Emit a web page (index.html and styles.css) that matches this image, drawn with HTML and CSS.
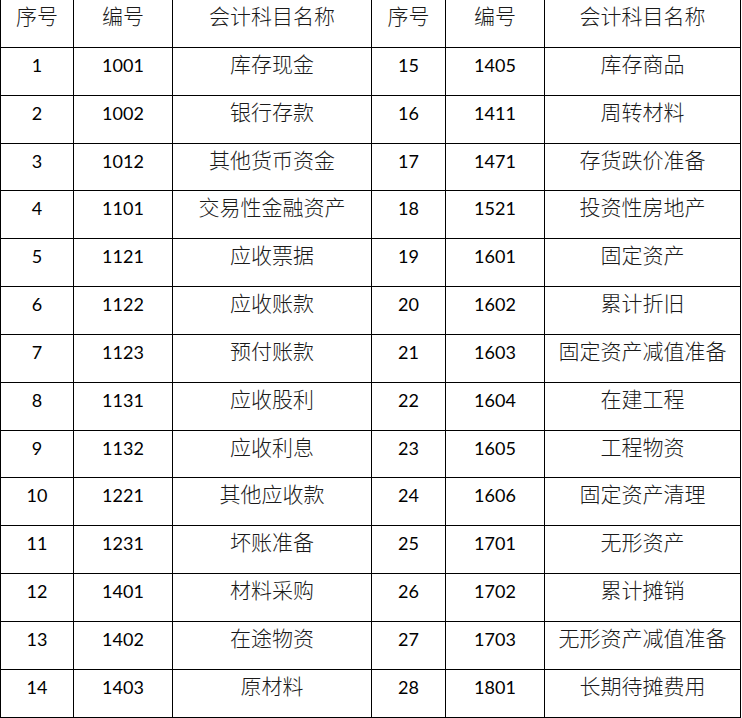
FILE: index.html
```html
<!DOCTYPE html>
<html lang="zh-CN">
<head>
<meta charset="utf-8">
<title>会计科目表</title>
<link rel="stylesheet" href="styles.css">
</head>
<body>
<div class="sheet">
  <div class="cell head">序号</div><div class="cell head">编号</div><div class="cell head">会计科目名称</div><div class="cell head">序号</div><div class="cell head">编号</div><div class="cell head">会计科目名称</div>

  <div class="cell num">1</div><div class="cell num">1001</div><div class="cell name">库存现金</div><div class="cell num">15</div><div class="cell num">1405</div><div class="cell name">库存商品</div>
  <div class="cell num">2</div><div class="cell num">1002</div><div class="cell name">银行存款</div><div class="cell num">16</div><div class="cell num">1411</div><div class="cell name">周转材料</div>
  <div class="cell num">3</div><div class="cell num">1012</div><div class="cell name">其他货币资金</div><div class="cell num">17</div><div class="cell num">1471</div><div class="cell name">存货跌价准备</div>
  <div class="cell num">4</div><div class="cell num">1101</div><div class="cell name">交易性金融资产</div><div class="cell num">18</div><div class="cell num">1521</div><div class="cell name">投资性房地产</div>
  <div class="cell num">5</div><div class="cell num">1121</div><div class="cell name">应收票据</div><div class="cell num">19</div><div class="cell num">1601</div><div class="cell name">固定资产</div>
  <div class="cell num">6</div><div class="cell num">1122</div><div class="cell name">应收账款</div><div class="cell num">20</div><div class="cell num">1602</div><div class="cell name">累计折旧</div>
  <div class="cell num">7</div><div class="cell num">1123</div><div class="cell name">预付账款</div><div class="cell num">21</div><div class="cell num">1603</div><div class="cell name">固定资产减值准备</div>
  <div class="cell num">8</div><div class="cell num">1131</div><div class="cell name">应收股利</div><div class="cell num">22</div><div class="cell num">1604</div><div class="cell name">在建工程</div>
  <div class="cell num">9</div><div class="cell num">1132</div><div class="cell name">应收利息</div><div class="cell num">23</div><div class="cell num">1605</div><div class="cell name">工程物资</div>
  <div class="cell num">10</div><div class="cell num">1221</div><div class="cell name">其他应收款</div><div class="cell num">24</div><div class="cell num">1606</div><div class="cell name">固定资产清理</div>
  <div class="cell num">11</div><div class="cell num">1231</div><div class="cell name">坏账准备</div><div class="cell num">25</div><div class="cell num">1701</div><div class="cell name">无形资产</div>
  <div class="cell num">12</div><div class="cell num">1401</div><div class="cell name">材料采购</div><div class="cell num">26</div><div class="cell num">1702</div><div class="cell name">累计摊销</div>
  <div class="cell num">13</div><div class="cell num">1402</div><div class="cell name">在途物资</div><div class="cell num">27</div><div class="cell num">1703</div><div class="cell name">无形资产减值准备</div>
  <div class="cell num">14</div><div class="cell num">1403</div><div class="cell name">原材料</div><div class="cell num">28</div><div class="cell num">1801</div><div class="cell name">长期待摊费用</div>
</div>
</body>
</html>
```

FILE: styles.css
```css
html, body {
  margin: 0;
  padding: 0;
  background: #fff;
}

.sheet {
  display: grid;
  grid-template-columns: 73px 99px 199px 74px 99px 196px;
  grid-template-rows: 48px repeat(14, 47.83px);
  width: max-content;
  border-left: 1px solid #000;
}

.cell {
  box-sizing: border-box;
  border-right: 1px solid #000;
  border-bottom: 1px solid #000;
  text-align: center;
  white-space: nowrap;
  overflow: hidden;
}

.head,
.name {
  font-family: "Noto Sans CJK SC", "Noto Sans", sans-serif;
  font-size: 21px;
  font-weight: 300;
  color: #1a1a1a;
  line-height: 24px;
  padding-top: 3px;
}

.num {
  font-family: Lato, "Liberation Sans", sans-serif;
  font-size: 18px;
  color: #000;
  line-height: 24px;
  padding-top: 5px;
}
```
